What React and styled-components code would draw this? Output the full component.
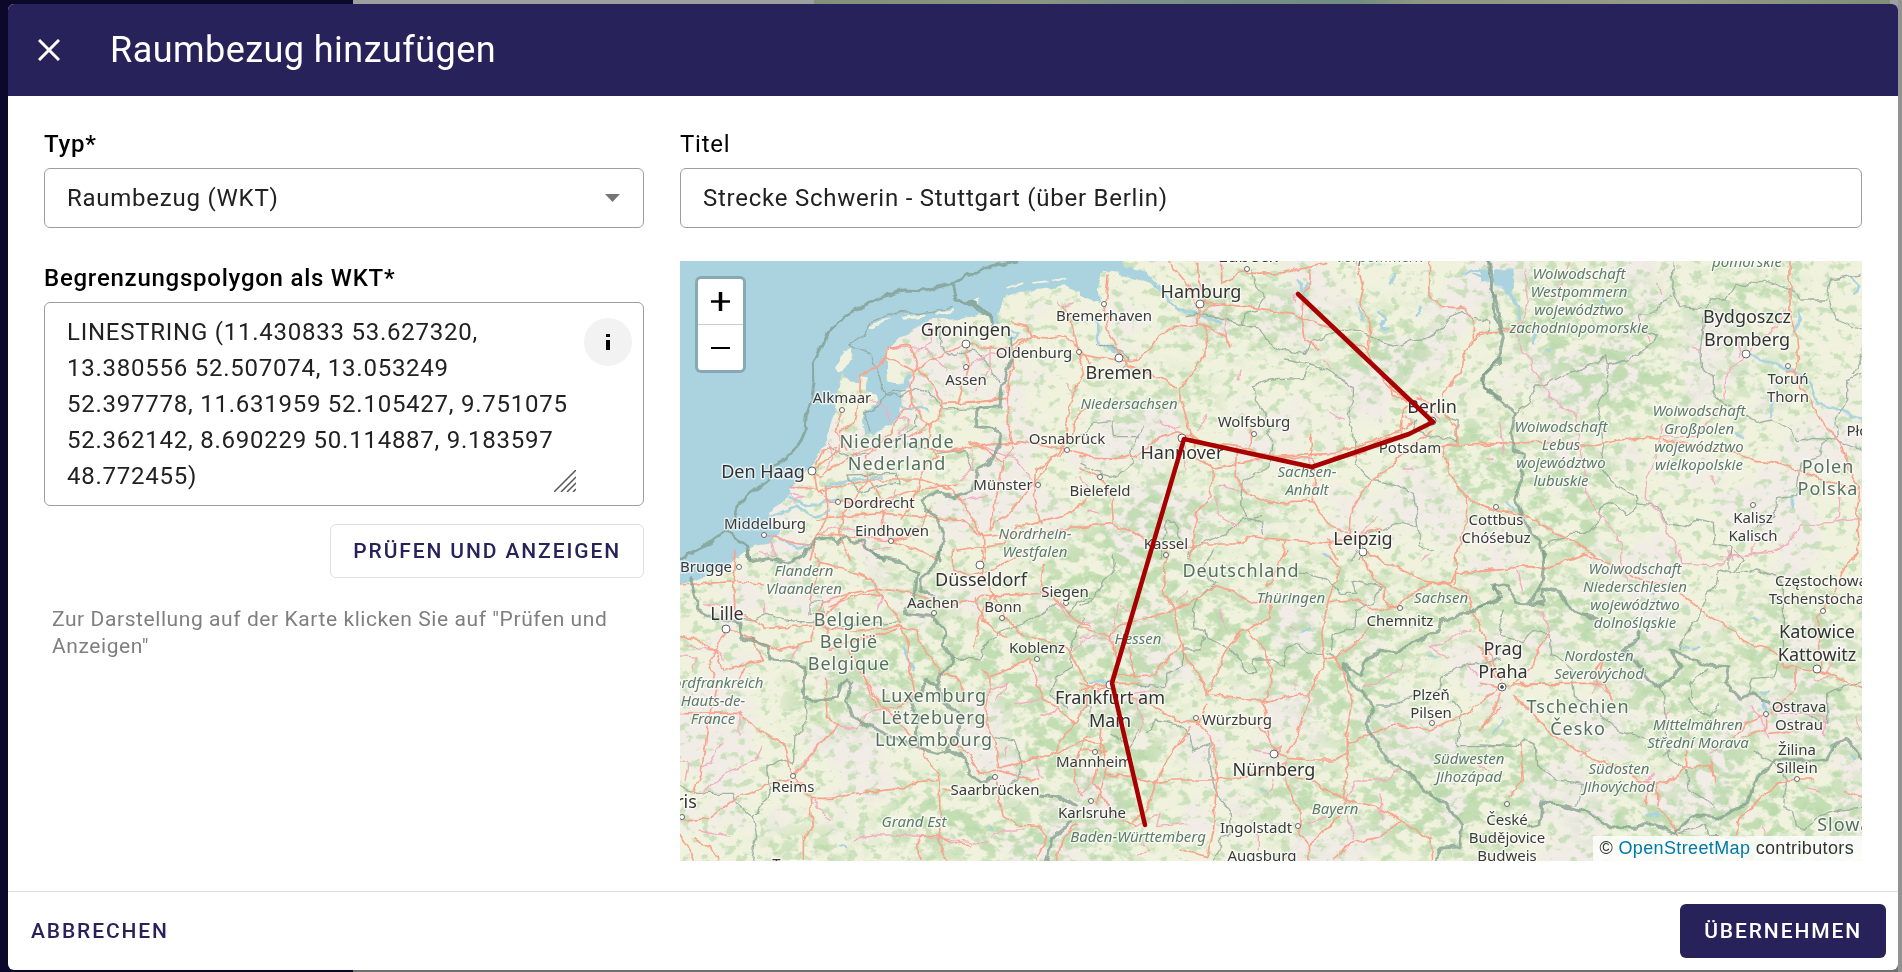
import React, { useState } from "react";
import styled, { createGlobalStyle, css } from "styled-components";

const navy = "#28225a";

const GlobalStyle = createGlobalStyle`
  *, *::before, *::after { box-sizing: border-box; }
  body {
    margin: 0;
    font-family: Roboto, "Liberation Sans", sans-serif;
    color: #000;
  }
  button, input, select, textarea { font: inherit; color: inherit; letter-spacing: inherit; }
`;

const Page = styled.div`
  display: grid;
  grid-template-columns: 353px 1fr;
  min-height: 100vh;
  background: #929292;
`;

const Sidebar = styled.div`
  background: #0b0829;
`;

const Results = styled.div`
  display: flex;
  justify-content: flex-end;
  padding-right: 8px;
  border-right: 4px solid #929292;
  background: linear-gradient(#9f9f9f 0 50%, #707070 50%);
`;

const ResultsMap = styled.div`
  width: 70%;
  height: 40%;
  background: linear-gradient(90deg, #84907c, #8b9581 20%, #7b8f89 30%, #6f8d80 50%, #8d9783 56%, #969a8a 80%, #7e8f76);
`;

const Backdrop = styled.div`
  position: fixed;
  inset: 0;
  display: flex;
  padding: 4px 4px 2px 8px;
`;

const Dialog = styled.form`
  flex: 1;
  min-width: 0;
  display: flex;
  flex-direction: column;
  overflow: hidden;
  background: #fff;
  border-radius: 6px;
  font-size: 24px;
  letter-spacing: 0.03125em;
`;

const Header = styled.header`
  display: flex;
  align-items: center;
  gap: 28px;
  height: 92px;
  padding: 0 8px;
  flex: none;
  background: ${navy};
  color: #fff;
`;

const CloseButton = styled.button`
  display: grid;
  place-items: center;
  width: 66px;
  height: 66px;
  padding: 0;
  border: 0;
  background: none;
  cursor: pointer;
`;

const Title = styled.h1`
  margin: 0;
  font-size: 36px;
  line-height: 48px;
  font-weight: 400;
  letter-spacing: 0.0125em;
`;

const Content = styled.div`
  flex: 1;
  min-height: 0;
  display: grid;
  grid-template-columns: 600px minmax(0, 1fr);
  grid-template-rows: auto 1fr;
  gap: 33px 36px;
  padding: 32px 36px 0;
`;

const Field = styled.div`
  display: flex;
  flex-direction: column;
  gap: 8px;
`;

const Label = styled.label`
  line-height: 32px;
  font-weight: ${(p) => (p.$required ? 500 : 400)};
`;

const outlined = css`
  border: 1px solid #9e9e9e;
  border-radius: 6px;
  background: #fff;
  color: #212121;
`;

const SelectBox = styled.div`
  display: grid;
  align-items: center;
  > * { grid-area: 1 / 1; }
  > svg { justify-self: end; margin-right: 24px; pointer-events: none; }
`;

const Select = styled.select`
  ${outlined}
  appearance: none;
  width: 100%;
  height: 60px;
  padding: 0 22px;
`;

const TextInput = styled.input`
  ${outlined}
  width: 100%;
  height: 60px;
  padding: 0 22px;
`;

const AreaBox = styled.div`
  ${outlined}
  display: flex;
  align-items: flex-start;
  height: 204px;
  padding: 11px 11px 9px 22px;
`;

const TextArea = styled.textarea`
  flex: 1;
  height: 182px;
  padding: 0;
  border: 0;
  outline: 0;
  resize: none;
  overflow: hidden;
  background: none;
  line-height: 36px;
`;

const Grip = styled.svg`
  flex: none;
  align-self: flex-end;
  margin: 0 8px 4px -22px;
`;

const InfoButton = styled.button`
  flex: none;
  display: grid;
  place-items: center;
  width: 48px;
  height: 48px;
  margin-top: 4px;
  padding: 0;
  border: 0;
  border-radius: 50%;
  background: #f2f2f2;
  color: #000;
`;

const WktColumn = styled.div`
  padding-top: 1px;
`;

const Button = styled.button`
  height: 54px;
  padding: 0 ${(p) => (p.$kind === "filled" ? 23 : 22)}px;
  border: 1px solid ${(p) => (p.$kind === "outlined" ? "#e0e0e0" : "transparent")};
  border-radius: 6px;
  background: ${(p) => (p.$kind === "filled" ? navy : "transparent")};
  color: ${(p) => (p.$kind === "filled" ? "#fff" : navy)};
  font-size: 21px;
  font-weight: 500;
  letter-spacing: 0.09em;
  text-transform: uppercase;
  cursor: pointer;
`;

const ButtonRow = styled.div`
  display: flex;
  justify-content: flex-end;
  padding-top: 18px;
`;

const Hint = styled.p`
  margin: 28px 8px 0;
  font-size: 21px;
  line-height: 27px;
  letter-spacing: 0.0275em;
  color: #7f7f7f;
`;

const Footer = styled.footer`
  flex: none;
  display: flex;
  align-items: center;
  justify-content: space-between;
  height: 79px;
  padding: 0 12px 0 0;
  border-top: 1px solid #e0e0e0;
`;

const MapFrame = styled.section`
  position: relative;
  height: 600px;
  overflow: hidden;
  font-family: "Liberation Sans", sans-serif;
  > svg { display: block; width: 100%; height: 100%; }
`;

const ZoomControl = styled.div`
  position: absolute;
  left: 15px;
  top: 15px;
  display: flex;
  flex-direction: column;
  border: 3px solid rgba(0, 0, 0, 0.2);
  border-radius: 6px;
  background: #fff;
  background-clip: padding-box;
`;

const ZoomButton = styled.button`
  display: grid;
  place-items: center;
  width: 45px;
  height: 45px;
  padding: 0;
  border: 0;
  background: none;
  & + & { height: 46px; border-top: 1px solid #ccc; }
`;

const Attribution = styled.div`
  position: absolute;
  right: 0;
  bottom: 0;
  padding: 0 8px 0 7px;
  background: rgba(255, 255, 255, 0.8);
  color: #333;
  font-size: 18px;
  line-height: 25px;
  letter-spacing: 0.02em;
  a { color: #0078a8; text-decoration: none; }
`;

const Place = styled.text`
  font-family: "Noto Sans", sans-serif;
  letter-spacing: normal;
  text-anchor: middle;
  paint-order: stroke;
  stroke: rgba(255, 255, 255, 0.65);
  stroke-width: 3px;
  stroke-linejoin: round;
  ${(p) => kinds[p.$kind]}
`;

const kinds = {
  L: css`font-size: 18px; fill: #333;`,
  M: css`font-size: 15px; fill: #3b3b3b;`,
  C: css`font-size: 18px; fill: #56705f; letter-spacing: 1px;`,
  R: css`font-size: 15px; fill: #5f7a6a; font-style: italic;`,
};

const labels = [
  ["L", 286, 75, "Groningen"], ["L", 83, 217, "Den Haag"], ["L", 521, 37, "Hamburg"], ["L", 568, 1, "Lübeck"],
  ["L", 439, 118, "Bremen"], ["L", 502, 198, "Hannover"], ["L", 683, 284, "Leipzig"], ["L", 752, 152, "Berlin"],
  ["L", 1067, 62, "Bydgoszcz", "Bromberg"], ["L", 47, 359, "Lille"], ["L", 301, 325, "Düsseldorf"],
  ["L", 430, 443, "Frankfurt am", "Main"], ["L", -4, 547, "Paris"], ["L", 823, 394, "Prag", "Praha"],
  ["L", 594, 515, "Nürnberg"], ["L", 1137, 377, "Katowice", "Kattowitz"],
  ["M", 424, 60, "Bremerhaven"], ["M", 354, 97, "Oldenburg"], ["M", 286, 124, "Assen"], ["M", 162, 142, "Alkmaar"],
  ["M", 199, 247, "Dordrecht"], ["M", 85, 268, "Middelburg"], ["M", 212, 275, "Eindhoven"], ["M", 323, 229, "Münster"],
  ["M", 387, 183, "Osnabrück"], ["M", 574, 166, "Wolfsburg"], ["M", 420, 235, "Bielefeld"], ["M", 486, 288, "Kassel"],
  ["M", 730, 192, "Potsdam"], ["M", 816, 264, "Cottbus", "Chóśebuz"], ["M", 1108, 123, "Toruń", "Thorn"],
  ["M", 1185, 175, "Płock"], ["M", 1073, 262, "Kalisz", "Kalisch"], ["M", 26, 311, "Brugge"], ["M", 253, 347, "Aachen"],
  ["M", 323, 351, "Bonn"], ["M", 385, 336, "Siegen"], ["M", 357, 392, "Koblenz"], ["M", 414, 506, "Mannheim"],
  ["M", 113, 531, "Reims"], ["M", 315, 534, "Saarbrücken"], ["M", 412, 557, "Karlsruhe"], ["M", 115, 608, "Troyes"],
  ["M", 720, 365, "Chemnitz"], ["M", 751, 439, "Plzeň", "Pilsen"], ["M", 557, 464, "Würzburg"],
  ["M", 576, 572, "Ingolstadt"], ["M", 582, 600, "Augsburg"], ["M", 827, 564, "České", "Budějovice", "Budweis"],
  ["M", 1141, 325, "Częstochowa", "Tschenstochau"], ["M", 1119, 451, "Ostrava", "Ostrau"], ["M", 1117, 494, "Žilina", "Sillein"],
  ["C", 217, 187, "Niederlande", "Nederland"], ["C", 1148, 212, "Polen", "Polska"],
  ["C", 169, 365, "Belgien", "België", "Belgique"], ["C", 254, 441, "Luxemburg", "Lëtzebuerg", "Luxembourg"],
  ["C", 561, 316, "Deutschland"], ["C", 898, 452, "Tschechien", "Česko"], ["C", 1178, 570, "Slowakei"],
  ["R", 355, 278, "Nordrhein-", "Westfalen"], ["R", 700, 1, "Vorpommern"], ["R", 449, 148, "Niedersachsen"],
  ["R", 627, 216, "Sachsen-", "Anhalt"], ["R", 899, 18, "Woiwodschaft", "Westpommern", "województwo", "zachodniopomorskie"],
  ["R", 1067, 6, "pomorskie"], ["R", 1019, 155, "Woiwodschaft", "Großpolen", "województwo", "wielkopolskie"],
  ["R", 881, 171, "Woiwodschaft", "Lebus", "województwo", "lubuskie"], ["R", 124, 315, "Flandern", "Vlaanderen"],
  ["R", 33, 427, "Nordfrankreich", "Hauts-de-", "France"], ["R", 234, 566, "Grand Est"], ["R", 458, 581, "Baden-Württemberg"],
  ["R", 611, 342, "Thüringen"], ["R", 761, 342, "Sachsen"], ["R", 458, 383, "Hessen"],
  ["R", 789, 503, "Südwesten", "Jihozápad"], ["R", 655, 553, "Bayern"],
  ["R", 955, 313, "Woiwodschaft", "Niederschlesien", "województwo", "dolnośląskie"],
  ["R", 919, 400, "Nordosten", "Severovýchod"], ["R", 1018, 469, "Mittelmähren", "Střední Morava"],
  ["R", 939, 513, "Südosten", "Jihovýchod"],
];
const pitch = { L: 23, M: 18, C: 22, R: 18 };

const bigTowns = [
  [286, 83], [132, 210], [520, 43], [439, 97], [502, 177], [683, 291], [752, 160], [1066, 93], [46, 368], [300, 304],
  [594, 493], [1137, 408], [430, 424],
];
const towns = [
  [286, 106], [162, 149], [158, 241], [84, 274], [211, 280], [358, 224], [387, 189], [399, 91], [567, 8], [424, 43],
  [574, 173], [420, 216], [486, 294], [816, 246], [1108, 105], [1073, 244], [59, 306], [254, 352], [322, 357], [386, 342],
  [357, 398], [113, 515], [315, 516], [720, 347], [516, 457], [752, 462], [415, 491], [411, 540], [618, 565], [827, 543],
  [1143, 350], [1086, 453], [1117, 518], [2, 556],
];

/* Six map tiles, each drawn in its own grid at a third of a pixel per unit. */
const tiles = [
  {
    at: [-10, -11],
    sea: [
      "M0 0H1270V130L1210 122L1190 108L1120 118L1050 125L1008 138L985 185L988 225L965 215L945 190L870 208L790 210L740 230L690 260L650 300L652 390L680 405L720 395L725 410L692 420L695 460L690 490L665 520L620 545L580 552L574 520L585 480L625 455L620 435L588 425L590 385L572 380L572 400L545 398L515 368L505 420L490 500L460 590L425 650L390 690L355 715L362 730L325 765L295 790L310 830L330 845L300 880L250 888L200 915L170 960H0Z",
    ],
    land: [
      "M540 290L548 310L535 345L512 365L498 358L515 320Z", "M595 232L640 210L665 205L640 220L600 240Z",
      "M695 200L770 193L760 203L700 209Z", "M795 185L855 177L850 187L800 194Z", "M905 152L930 145L920 162Z",
      "M1005 112L1060 97L1060 103L1010 116Z", "M1085 97L1135 90L1135 97L1090 101Z", "M1150 82L1190 86L1185 92L1150 88Z",
      "M650 295L700 290L690 400L655 395Z",
    ],
    water: [
      "M300 800L380 770L430 800L480 785", "M330 865L390 895L420 885", "M360 740L410 770L500 745", "M470 710L540 690L640 680",
      "M590 490L610 550", "M720 380L700 410", "M690 470L775 480", "M1015 240L1050 250L1040 265L1015 262",
    ],
    national: [
      "M30 925L100 890L170 840L195 810L205 765L240 730L290 695L310 645L350 625L385 590L405 545L408 500L425 450L432 400L430 340L460 280L480 240L530 195L600 155L700 120L760 122L845 100L890 75L940 60L990 42L1040 33",
      "M845 100L860 145L900 165L940 190L965 200L968 235", "M895 155L935 175L965 195",
      "M1022 265L1025 330L1010 370L995 420L990 470L920 475L920 530L975 535L990 560L990 590L955 640L920 660L910 720L850 740L800 725L762 750L765 780L800 800L820 850L810 930",
      "M170 845L230 890L240 930", "M400 920L440 870L480 860L505 880L530 855L555 880L580 870L590 900L640 930",
    ],
    border: [
      "M535 283L580 255L600 220L680 187L750 190L850 170", "M535 283L600 310L645 430L710 420", "M645 430L635 460L580 490L600 540",
      "M820 230L810 290L850 320L905 300L950 340L990 400", "M645 430L690 440L740 410L795 440L820 480L940 475",
      "M740 500L740 530L685 560L700 585L800 600", "M530 675L545 700L570 730L640 705L690 700L680 670L530 675",
      "M470 590L540 620L600 610", "M910 660L880 600L800 610",
    ],
    road: [
      "M575 380L650 320L730 365L800 320L860 295L890 280L940 295L1010 290L1080 260L1150 265L1180 255L1230 300L1260 340",
      "M650 320L655 295L720 285L750 360L815 450L815 500L720 560L640 580L540 620L450 680L430 670",
      "M575 380L572 430L555 520L515 540L510 600L440 650", "M732 370L722 410L725 460L680 500L670 540L590 620L590 700L520 790L510 860L540 930",
      "M725 460L760 510L780 525L775 600L830 605L900 590L1050 575L1190 600L1260 620", "M890 290L897 350L870 440L860 460L990 445",
      "M820 460L940 455L1010 445", "M1025 220L1070 230L1080 260L1030 300L1030 350L1015 390L1015 530L1030 590L1000 640L975 760L960 840",
      "M430 670L440 725L480 715L600 690L760 690L840 720", "M360 710L430 710L480 755L610 760L730 720L860 705",
      "M515 480L500 540L530 600", "M440 810L520 800L640 790L760 800L880 810L940 860L1100 845L1260 830",
      "M290 855L380 880L420 885L450 850L580 860L650 870L740 900L800 930", "M760 560L800 620L770 640L750 690L720 770L690 810",
      "M640 790L635 840L665 875L740 850L780 780", "M835 710L880 760L940 860L945 930", "M960 840L1010 790L1060 740L1170 600L1210 560L1220 500L1260 460",
      "M1190 600L1160 620L1100 660L1090 740L1115 820", "M1180 170L1210 230L1225 310", "M440 640L460 600L500 590",
      "M470 710L475 800L440 860L420 930", "M600 690L630 740L640 790", "M1000 640L950 600L900 575", "M860 900L1000 880L1040 830L1180 800L1260 740",
      "M1225 310L1240 370L1200 460L1180 600",
    ],
    pink: [
      "M650 295L760 290L830 360", "M770 220L780 280L740 300", "M660 510L650 470L600 450", "M670 500L720 505L690 550",
      "M880 360L960 310L1000 320", "M905 590L910 650L870 690", "M1160 155L1180 175L1210 155", "M940 590L1040 630L1095 700",
      "M870 750L950 740", "M300 870L320 920L270 905", "M360 730L400 740L370 755", "M960 290L960 350L920 420",
      "M680 720L640 800", "M470 580L490 620L470 660", "M440 850L500 830L560 845", "M1190 400L1210 430", "M560 870L600 900L660 890",
    ],
  },
  {
    at: [400, -11],
    sea: ["M0 0H130L120 65L70 60L55 90L60 160L0 140Z", "M100 0L130 55L200 65L240 110L245 130L215 100L170 85L120 75Z"],
    land: ["M0 145L30 145L60 165L50 200L0 190Z"],
    water: [
      "M240 110L265 150L310 185L360 195L420 215", "M660 90L665 120M680 100L675 150", "M895 180L915 205L905 230L925 235",
      "M835 170L845 210", "M945 70L930 100", "M1150 70L1210 60L1230 90L1180 75", "M1020 170L1010 200", "M50 200L55 280L120 310",
    ],
    national: ["M1225 33L1240 80L1240 180L1262 240", "M1262 330L1215 370L1210 410L1262 445"],
    border: [
      "M515 60L530 110L555 140L530 180L495 190L490 225L540 235L560 270L600 300L670 310L690 275L730 265L780 240L840 245L890 270L960 290L1000 270L1040 265L1090 230L1110 200L1150 185L1180 205L1230 210L1225 255",
      "M490 225L440 210L370 190L320 200", "M620 330L690 345L740 360L800 400L820 410L820 450L805 490L820 540L830 640L870 690L930 700L1000 730L1010 800L1020 890L1060 900",
      "M690 345L670 385L570 390L520 405L530 450L560 500L575 580L570 650L490 690L485 760L500 800L545 820L550 850",
      "M545 800L485 810L440 850L340 890L320 930", "M190 530L150 600L160 640L110 680L40 660L0 640", "M0 560L40 520L95 515L100 560L180 560",
      "M50 280L120 300L150 330L130 350", "M240 930L260 810L290 830L300 870", "M1010 510L1000 540L1060 560L1130 570L1135 510L1100 500",
      "M840 930L870 850L960 820L1010 830",
    ],
    road: [
      "M260 30L300 75L330 110L360 200L350 225L375 225", "M350 35L352 90L380 160L500 170L640 190L670 210L740 230L860 300L880 350L930 410L990 460",
      "M440 160L390 170L350 200L350 230L290 225L235 260L200 310L160 335L110 330L0 310", "M425 30L425 100L490 65L500 70L610 68L740 40",
      "M375 225L380 290L350 360L300 410L300 450L330 550L370 580L480 590L570 620L760 610L870 575L960 540L1000 520",
      "M85 70L75 170L85 240L120 310L150 345L220 375L290 410", "M375 225L440 260L450 285", "M690 60L690 110L670 130L665 200L675 265L720 300",
      "M825 30L850 110L840 160L870 220L865 300", "M1048 30L1050 140L1090 170L1160 175L1180 210L1180 270L1150 310L1140 370L1090 420L1090 450",
      "M1262 240L1200 250L1180 270", "M240 560L290 545L340 560L350 625L400 655L470 640L580 620L700 625",
      "M400 655L390 740L350 790L340 880L330 930", "M470 590L465 680L500 730L570 760L700 755L705 670L695 600", "M700 755L740 820L780 840L810 850L815 780L860 710L960 620L1060 540",
      "M340 885L460 885L510 860L620 870L740 880L820 860L900 835", "M0 620L110 625L170 620L240 560", "M0 655L60 680L95 740L100 820L0 830", "M100 820L180 860L240 890L340 890",
      "M510 590L512 540M960 560L970 480L1010 450L1060 460L1130 530L1135 580L1080 590L1262 580", "M1090 590L1110 680L1160 740L1230 780L1262 780", "M1160 740L1160 800L1125 930",
      "M935 410L940 440L1000 450", "M740 870L770 930M620 870L600 930", "M990 550L900 570L830 620L760 620", "M690 600L695 550",
    ],
    pink: [
      "M640 130L650 160", "M440 180L435 240L450 290", "M480 360L475 390", "M240 510L280 540L300 530", "M380 490L350 540", "M400 740L420 800L475 830", "M420 700L480 720",
      "M310 590L320 660", "M730 330L750 360M750 490L790 510", "M1010 430L1040 470L1080 510", "M970 500L1000 520", "M680 640L700 600", "M1000 660L970 660", "M840 850L890 800", "M0 680L30 720M20 780L60 790",
    ],
  },
  {
    at: [800, -11],
    sea: ["M45 60L100 55L105 110L85 140L65 110L45 100Z", "M0 52L30 55L35 95L0 98Z"],
    land: [],
    water: [
      "M85 120L115 180L120 210", "M160 250L165 280", "M200 300L210 305", "M800 310L900 350L940 360L990 400L1010 460L1080 480L1145 510", "M1115 80L1135 110L1125 130",
      "M950 240L960 180", "M870 440L875 500", "M770 550L790 560", "M940 740L935 775", "M80 760L100 780", "M360 130L370 160",
    ],
    national: ["M22 33L35 110L55 180L70 260L55 330L12 375L10 410L60 450L105 490L95 550L100 600L130 610L125 690L105 750L150 850L180 870L190 930"],
    border: [
      "M580 35L575 120L600 170L660 175", "M575 135L540 160L530 185L480 190L475 235L530 255L520 280L440 330L385 345L380 315L350 340L290 365L250 375L200 405L165 405L150 460L105 490",
      "M385 345L380 420L350 460L360 500L370 590L360 650L390 690L430 720L470 740L470 770L440 795L400 755L365 770L360 805L320 850L270 850L190 890",
      "M675 175L690 150L740 150L770 100L810 105L850 90L930 120L960 150L1040 150L1055 90L1140 75", "M675 175L660 310L665 355L700 380L700 430L730 460L790 490L830 520L880 510L935 540L955 575L1000 565L1070 570L1145 600",
      "M1050 150L1070 210L1145 240", "M1145 370L1100 390L1100 450L1070 500L1075 560L1020 580L1020 620L960 640L950 740L890 745L885 800L830 830",
      "M470 760L530 770L560 820L620 830L650 810L700 820L705 880L750 890L745 930", "M1145 320L1120 370",
    ],
    road: [
      "M0 258L60 240L110 238", "M930 33L930 190L950 250L955 330L945 370L975 430L1030 520L1085 580L1115 680L1140 720L1130 790L1140 870L1120 930",
      "M0 576L100 580L200 575L340 588L420 570L500 562L590 575L680 595L760 605L830 635L900 640L970 665L1030 690L1140 720", "M0 765L60 785L140 795L220 845L300 885L350 920", "M270 930L320 910", "M920 360L950 370",
    ],
    pink: [
      "M265 33L250 80L225 150", "M135 60L145 150L130 220L105 235L125 300L155 325L160 365L220 450L290 500L300 600L325 740L380 820L425 880L425 930",
      "M920 180L890 230L830 270L800 320L740 370L730 450L690 510L640 560L540 560", "M540 560L530 620L500 690L495 750L540 790L570 860L605 930", "M545 520L540 560", "M780 320L775 260", "M720 920L800 915L880 910L930 870L960 825L1060 820L1115 810L1145 810",
      "M1080 740L1075 800L1060 820", "M500 240L510 275", "M800 920L830 880", "M60 520L70 610", "M640 295L660 300M690 680L705 700", "M20 630L40 625", "M740 900L760 930", "M530 100L545 130",
    ],
  },
  {
    at: [-10, 289],
    sea: ["M0 0H235L190 30L110 75L60 95L0 115Z"],
    land: [],
    water: ["M510 885L530 890", "M700 290L730 360", "M960 830L970 835"],
    national: [
      "M60 80L80 150L80 180L130 205L210 220L215 265L260 275L295 290L300 330L370 335L405 355L400 440L430 455L500 445L510 405L530 390L545 400L530 450L545 500L600 530L660 560L740 590L800 610L840 600L885 625L900 670L930 695L975 685",
      "M235 0L240 35L300 25L360 40L410 0", "M600 0L620 20L680 30L740 70L730 150L705 190L790 200L825 240L820 290L850 320L850 340L810 370L800 410L770 385L755 430L720 450L745 500L740 590",
      "M815 0L785 60L750 90L750 120L790 140", "M800 410L825 460L880 500L860 560L830 600", "M1110 735L1160 740L1220 765", "M1205 815L1150 860L1130 930",
    ],
    border: [
      "M215 205L250 210L290 190L320 205L380 215L440 215", "M420 155L455 150L460 190L420 190Z", "M440 215L480 235L560 225L690 215", "M850 325L900 325L930 330L935 295L985 250L1050 225L1100 200L1160 160L1200 190L1220 160L1260 140",
      "M405 450L410 520L375 560L370 640L330 630L290 655L300 730L250 800L260 860L245 930", "M30 705L80 730L190 730L200 760L250 800", "M975 560L1030 570L1040 600L1055 640L1040 690L1020 700",
      "M1200 300L1205 350L1160 380L1140 430L1190 470", "M1240 200L1210 260L1200 300",
    ],
    road: [
      "M30 105L190 95L195 180L290 235L420 225L560 245L690 230", "M190 90L280 105M195 0L190 90", "M170 240L120 330L140 420L115 520L95 660L70 730", "M175 235L240 265L330 300L420 275L455 160L540 130L620 115L740 130",
      "M30 260L90 270L130 300L160 360L230 340L280 330L245 270", "M30 488L210 490L260 540L340 580L365 670L420 740L430 830L400 860L400 930", "M425 745L490 745L560 730L700 715L740 695L810 690",
      "M420 150L450 40L430 0M450 40L530 60L600 90L620 120L690 220", "M690 230L715 290L720 360L735 430L690 470L640 480L560 340L540 300", "M620 470L580 380L560 350", "M640 470L700 530L760 600L770 630L805 665L810 780L800 870L830 930",
      "M370 680L470 560L510 525L470 500L470 380", "M690 230L740 240L760 290L810 370L860 380L880 420L880 460", "M735 130L830 180L860 160L930 140L1110 130", "M935 0L940 80L970 130L1000 200L1060 255L1180 290", "M970 130L930 200L910 290M910 140L940 210L1010 265",
      "M1120 50L1110 120L1160 150L1210 205L1260 230", "M940 360L960 390L950 470L945 520L975 570L980 650L1000 650L1100 625L1170 605L1230 575L1260 560", "M960 380L1010 360L1080 325L1100 400L1120 450L1160 470L1210 520L1155 610",
      "M1190 290L1250 400L1250 470L1210 520", "M830 560L900 620L930 670L980 660L1050 680L1100 690", "M980 700L1000 800L1040 825L1110 830L1130 860L1100 930", "M820 715L850 715M745 860L800 855L840 875L900 885",
      "M30 815L120 805L190 750L260 720L330 690L400 700", "M30 850L60 900L70 930M70 870L120 890L140 930", "M745 870L750 930M1240 570L1220 640L1210 700L1240 740", "M1220 820L1180 860L1160 930", "M850 0L850 60L900 80L960 60L1080 0", "M480 170L580 130L640 140",
      "M200 400L230 340M540 130L460 200L480 300L530 280L600 260L680 240",
    ],
    pink: [
      "M100 160L150 170M280 150L285 190M330 300L380 290L360 340", "M50 285L130 300L160 330", "M30 320L80 325L70 360", "M30 635L55 640L45 690", "M280 590L260 630L170 670L100 730", "M155 580L120 640L100 650", "M370 675L400 640L440 590L500 530",
      "M500 525L560 540L585 490L640 480", "M550 870L620 855L740 855L810 865L950 880", "M750 600L720 590", "M1110 500L1170 480", "M1035 465L1120 445", "M1200 310L1250 270", "M950 420L1010 400L980 450", "M1010 590L1005 620", "M1100 640L1105 680L1120 690", "M965 860L1000 840L1060 840", "M1260 220L1190 200L1140 130", "M430 750L480 815", "M80 840L180 855M210 490L210 555",
      "M640 140L620 180",
    ],
  },
  {
    at: [400, 289],
    sea: [],
    land: [],
    water: ["M730 10L750 18", "M1050 320L1065 325", "M30 400L90 390", "M670 245L690 240", "M545 715L555 720"],
    national: [
      "M1262 140L1220 160L1160 190L1085 210L1080 240L1020 270L990 280L950 310L900 300L860 330L840 380L790 340L810 390L870 450L880 480L855 520L880 560L920 630L980 660L1040 730L1100 760L1145 825L1140 890L1080 895L1070 930",
      "M1262 130L1235 120L1245 100",
    ],
    border: [
      "M100 20L105 60L70 90L50 130L20 160L0 165", "M380 120L345 160L340 240L375 240L380 265L440 290L485 330L490 365L530 365L515 330L580 330L610 350L620 290L650 280L680 310L750 310L770 330",
      "M380 120L405 100L370 60L400 0", "M310 290L310 350L260 370L260 410L170 405", "M200 550L230 510L290 520L330 560L340 600L390 580L390 640L400 700L410 740L450 780L455 850L420 860L425 890L400 930", "M90 550L150 590L180 540",
      "M660 70L740 90L780 130L830 130L820 90L900 110L880 160L830 180L825 230L760 250L755 300", "M890 465L950 465L1000 440L1080 420L1085 380L1160 345L1262 330", "M830 0L810 30", "M0 450L30 470L30 540", "M1262 590L1130 590L1145 480L1120 450",
      "M380 265L375 240M310 300L360 300L370 260",
    ],
    road: [
      "M260 0L250 120L280 180L300 270L320 330L370 400L385 435L460 440L550 460L650 435L690 430", "M270 180L350 150L400 110L460 125L520 155L570 155L570 205L500 240L480 245L435 310L400 390L380 435",
      "M0 230L90 260L110 330L90 400L0 420M100 380L220 375L300 290", "M270 185L180 210L130 220L90 260M150 290L160 380", "M560 110L580 90L600 30L620 0", "M500 245L550 300L575 360L575 410L550 460L570 580L620 625L700 630L770 630L800 615L805 580L880 550L935 525L1050 540L1160 490L1262 410",
      "M750 20L780 60L745 150L725 250L735 330L690 430L670 500L650 560L620 610", "M745 155L830 150L870 175L940 175L1000 130L1050 100L1100 100L1160 130L1190 210L1262 390", "M850 20L880 90L910 110L910 150L940 175", "M850 0L940 50L1040 95L1110 100L1130 70L1262 60",
      "M735 330L770 320L830 280L870 230", "M760 320L790 360L815 460L800 550L805 620L790 750", "M150 440L220 470L290 510L360 520L380 460", "M350 515L390 560L400 600L410 690", "M330 530L260 630L225 700L200 780L150 820", "M80 670L150 680L220 700L270 690L410 690L500 680L620 640",
      "M410 690L400 850L380 920L300 900", "M615 640L620 700L660 780L660 850L688 885L690 930", "M688 885L760 820L800 750L890 770L960 810L1050 870L1055 930", "M960 815L900 860L815 880L760 930", "M600 670L700 690L740 720L800 750", "M0 575L70 580L80 660L50 760M10 600L80 605",
      "M70 490L60 600L40 700L100 790L170 830M0 400L50 420L100 400L180 400", "M530 520L570 570M600 590L600 620", "M1262 470L1200 540M1130 0L1125 100",
    ],
    pink: [
      "M100 240L115 165L150 180", "M0 265L50 260L110 280", "M320 120L290 160M420 180L440 240", "M170 450L190 520L180 560", "M520 600L580 610L600 590", "M170 830L240 790L230 830L320 820", "M190 880L210 900L170 920", "M0 740L30 700L20 680", "M790 760L830 690L920 690L960 655", "M800 790L820 870", "M900 730L905 810",
      "M535 840L535 900", "M560 740L580 690", "M1045 290L1110 270L1150 240L1170 240M1045 290L1110 325", "M845 410L890 400L960 360L965 340", "M1160 345L1200 380", "M1160 150L1165 120", "M630 230L650 240M640 400L660 410", "M230 420L160 430", "M1025 30L1050 10", "M680 820L740 800",
    ],
  },
  {
    at: [800, 289],
    sea: [],
    land: [],
    water: ["M610 290L625 293M640 295L655 292", "M820 205L835 208", "M500 795L535 790L530 800", "M845 425L860 425", "M850 450L855 480", "M1110 620L1125 630", "M515 130L520 132", "M40 550L70 510"],
    national: [
      "M190 0L190 60L180 110L145 165L190 155L190 115L240 125L270 180L350 205", "M0 170L60 150L35 105L85 110L110 160L190 165", "M480 245L465 280L430 300L470 340L510 390L530 405L580 385L600 350L570 300L620 320L680 345L750 350L735 395L780 445L820 430L870 460",
      "M145 830L180 825L185 755L240 765L270 770L330 790L390 830L470 835L500 815L590 850L620 810L650 795L720 805L800 760L830 680L870 655L885 630L960 630L1040 630L1060 590L1100 565L1145 625",
    ],
    border: [
      "M70 180L55 220L70 260L130 275L160 245L210 250L215 310L270 350L280 440L310 460L420 540L500 570L560 570L550 420L540 400", "M560 570L570 630L620 660L630 720L700 765", "M0 585L120 590L135 565L165 580L170 650L230 690L310 700L290 765",
      "M600 300L610 250L650 215L680 140L710 100L715 60L760 70L790 30L760 0", "M760 70L830 60L890 80L910 110L910 290L880 380L820 385L805 430", "M630 440L640 470L690 500L720 460", "M680 360L630 400L640 440", "M820 600L850 620L885 640L920 690L910 770L940 780L950 830L970 840", "M870 480L910 460L1040 520L1040 430L1090 410L1145 400", "M750 0L750 60", "M600 850L680 820L690 860L800 860", "M970 840L1010 800L1080 780L1145 775",
      "M560 570L570 600L550 620",
    ],
    road: [
      "M0 60L150 50L190 60L310 10L400 45L480 90L580 110L620 150L690 200L740 230L800 280L880 300L920 350L1000 360L1040 370L1145 415", "M1130 0L1085 70L1070 120L1010 200L1015 280L1020 350", "M0 400L60 410L100 405L260 400L370 400L400 450", "M120 400L240 405", "M210 250L170 300L160 350L100 400",
      "M95 435L150 480L210 550L290 600L350 630L420 650L470 690L520 700L570 695L620 650L690 650L710 695", "M620 650L620 600M530 705L535 770L590 840L595 860", "M505 705L500 765", "M60 430L30 500L0 540M0 455L40 430M0 290L50 380", "M120 590L130 690L90 740",
      "M945 360L945 420L870 490L800 520L760 560M860 490L860 540L790 560M870 550L950 540", "M950 685L890 700L830 760L780 800L770 850", "M950 690L1000 690M1090 725L1145 740", "M690 630L700 670", "M340 370L370 330L350 400",
    ],
    pink: [
      "M165 180L190 190L210 250M110 60L130 130", "M425 0L420 50L440 90M600 0L605 40L720 45L750 20L900 0", "M340 430L350 400L400 440M340 400L350 380", "M570 480L555 500M810 470L840 500L870 570", "M870 490L980 490L1035 500L1030 560", "M1040 370L1060 330L1040 300M1000 390L1050 380",
      "M980 710L1020 720M690 610L730 580", "M630 540L610 570", "M300 620L330 600M500 690L520 670", "M845 830L850 850M1145 560L1130 500", "M0 650L30 660",
    ],
  },
];

const woods = [
  [480, 140, 60, 22], [560, 55, 70, 35], [470, 270, 60, 60], [560, 250, 50, 24], [420, 330, 70, 60], [330, 400, 70, 45], [230, 400, 70, 40], [240, 330, 40, 24],
  [460, 400, 60, 50], [530, 360, 60, 40], [600, 390, 60, 40], [680, 420, 60, 70], [760, 540, 90, 60], [450, 500, 40, 50], [380, 480, 50, 50], [340, 580, 60, 40], [430, 570, 40, 45],
  [620, 540, 50, 40], [760, 350, 60, 30], [880, 350, 60, 40], [960, 400, 60, 34], [1000, 460, 60, 40], [1100, 560, 90, 50], [1040, 500, 40, 60], [900, 60, 90, 50], [940, 120, 70, 50], [890, 240, 60, 60], [700, 90, 60, 40], [800, 200, 50, 50],
  [1060, 40, 60, 30], [1090, 120, 50, 20], [1110, 380, 70, 50], [160, 440, 60, 30], [960, 560, 60, 30], [260, 560, 60, 40], [130, 590, 50, 20], [830, 500, 60, 40], [1150, 470, 40, 50], [640, 320, 70, 20],
];

function Strokes({ paths, color, width, opacity }) {
  return (
    <g fill="none" stroke={color} strokeWidth={width} opacity={opacity} strokeLinejoin="round" strokeLinecap="round">
      {paths.map((d) => <path key={d} d={d} />)}
    </g>
  );
}

function TileLayer({ children }) {
  return tiles.map((t) => (
    <g key={t.at.join()} transform={`translate(${t.at[0]} ${t.at[1]}) scale(0.33333)`}>{children(t)}</g>
  ));
}

function MapDrawing() {
  return (
    <svg viewBox="0 0 1182 600" preserveAspectRatio="xMidYMid slice" role="img" aria-label="Karte mit Strecke Schwerin - Stuttgart">
      <defs>
        <filter id="scatter" x="0" y="0" width="100%" height="100%" colorInterpolationFilters="sRGB">
          <feTurbulence type="fractalNoise" baseFrequency="0.09 0.11" numOctaves="4" seed="8" />
          <feColorMatrix values="0 0 0 0 0.77  0 0 0 0 0.87  0 0 0 0 0.71  8 0 0 0 -4.5" />
        </filter>
        <filter id="groves" x="0" y="0" width="100%" height="100%" colorInterpolationFilters="sRGB">
          <feTurbulence type="fractalNoise" baseFrequency="0.06 0.08" numOctaves="5" seed="21" />
          <feColorMatrix values="0 0 0 0 0.73  0 0 0 0 0.85  0 0 0 0 0.67  7 0 0 0 -3.2" />
        </filter>
        <filter id="fields" x="0" y="0" width="100%" height="100%" colorInterpolationFilters="sRGB">
          <feTurbulence type="fractalNoise" baseFrequency="0.014" numOctaves="4" seed="3" />
          <feColorMatrix values="0 0 0 0 0.945  0 0 0 0 0.925  0 0 0 0 0.9  7 0 0 0 -3.4" />
        </filter>
        <filter id="soft"><feGaussianBlur stdDeviation="14" /></filter>
        <filter id="wiggle" x="-5%" y="-5%" width="110%" height="110%">
          <feTurbulence type="fractalNoise" baseFrequency="0.09" numOctaves="2" seed="5" />
          <feDisplacementMap in="SourceGraphic" scale="7" xChannelSelector="R" yChannelSelector="G" />
        </filter>
        <mask id="woodland">
          <g filter="url(#soft)" fill="#fff">
            {woods.map(([x, y, rx, ry]) => <ellipse key={`${x}-${y}`} cx={x} cy={y} rx={rx} ry={ry} />)}
          </g>
        </mask>
      </defs>
      <rect width="1182" height="600" fill="#f0f2dd" />
      <rect width="1182" height="600" filter="url(#fields)" />
      <rect width="1182" height="600" filter="url(#scatter)" opacity="0.8" />
      <g mask="url(#woodland)"><rect width="1182" height="600" filter="url(#groves)" opacity="0.8" /></g>
      <g filter="url(#wiggle)">
        <TileLayer>
          {(t) => (
            <>
              {t.sea.map((d) => <path key={d} d={d} fill="#aad3df" />)}
              {t.land.map((d) => <path key={d} d={d} fill="#f1f1e0" />)}
              <Strokes paths={t.water} color="#aad3df" width={8} />
            </>
          )}
        </TileLayer>
        <TileLayer>
          {(t) => (
            <>
              <Strokes paths={t.border} color="#8fa597" width={4} opacity={0.8} />
              <Strokes paths={t.pink} color="#f3adc0" width={4} />
              <Strokes paths={t.road} color="#f7a48d" width={5} />
              <Strokes paths={t.national} color="#7f9d8c" width={9} opacity={0.75} />
            </>
          )}
        </TileLayer>
      </g>
      <g fill="#fff" stroke="#666">
        {bigTowns.map(([x, y]) => <circle key={`${x}-${y}`} cx={x} cy={y} r="4" />)}
        {towns.map(([x, y]) => <circle key={`${x}-${y}`} cx={x} cy={y} r="2.5" />)}
        <circle cx="822" cy="426" r="4" />
        <circle cx="822" cy="426" r="1.5" fill="#444" />
      </g>
      {labels.map(([kind, x, y, ...lines]) =>
        lines.map((line, i) => (
          <Place key={`${x}-${y}-${line}`} $kind={kind} x={x} y={y + i * pitch[kind]}>{line}</Place>
        ))
      )}
      <polyline
        points="618,33 753,161 729,173 632,206 504,178 432,422 465,564"
        fill="none" stroke="#a80000" strokeWidth="4.5" strokeLinecap="round" strokeLinejoin="round"
      />
    </svg>
  );
}

const wkt =
  "LINESTRING (11.430833 53.627320, 13.380556 52.507074, 13.053249 52.397778, 11.631959 52.105427, 9.751075 52.362142, 8.690229 50.114887, 9.183597 48.772455)";

export default function App() {
  const [title, setTitle] = useState("Strecke Schwerin - Stuttgart (über Berlin)");
  const [geometry, setGeometry] = useState(wkt);
  return (
    <>
      <GlobalStyle />
      <Page>
        <Sidebar />
        <Results><ResultsMap /></Results>
      </Page>
      <Backdrop>
        <Dialog role="dialog" aria-labelledby="dialog-title" onSubmit={(e) => e.preventDefault()}>
          <Header>
            <CloseButton type="button" aria-label="Schließen">
              <svg width="22" height="22" viewBox="0 0 22 22" fill="none" stroke="#fff" strokeWidth="3">
                <path d="M1 1L21 21M21 1L1 21" />
              </svg>
            </CloseButton>
            <Title id="dialog-title">Raumbezug hinzufügen</Title>
          </Header>
          <Content>
            <Field>
              <Label htmlFor="type" $required>Typ*</Label>
              <SelectBox>
                <Select id="type" defaultValue="wkt">
                  <option value="wkt">Raumbezug (WKT)</option>
                </Select>
                <svg width="15" height="8" viewBox="0 0 15 8"><path d="M0 0H15L7.500 8Z" fill="#757575" /></svg>
              </SelectBox>
            </Field>
            <Field>
              <Label htmlFor="title">Titel</Label>
              <TextInput id="title" value={title} onChange={(e) => setTitle(e.target.value)} />
            </Field>
            <WktColumn>
              <Field>
                <Label htmlFor="wkt" $required>Begrenzungspolygon als WKT*</Label>
                <AreaBox>
                  <TextArea id="wkt" value={geometry} onChange={(e) => setGeometry(e.target.value)} />
                  <Grip width="22" height="22" viewBox="0 0 22 22" stroke="#555" strokeWidth="1.500">
                    <path d="M0 22L22 0M7 22L22 7M13 22L22 13M19 22L22 19" />
                  </Grip>
                  <InfoButton type="button" aria-label="Information">
                    <svg width="4" height="16" viewBox="0 0 4 16"><path d="M0 0H4V3H0ZM0 6H4V16H0Z" /></svg>
                  </InfoButton>
                </AreaBox>
              </Field>
              <ButtonRow>
                <Button type="button" $kind="outlined">Prüfen und Anzeigen</Button>
              </ButtonRow>
              <Hint>Zur Darstellung auf der Karte klicken Sie auf "Prüfen und Anzeigen"</Hint>
            </WktColumn>
            <MapFrame>
              <MapDrawing />
              <ZoomControl>
                <ZoomButton type="button" aria-label="Vergrößern">
                  <svg width="19" height="19" viewBox="0 0 19 19" stroke="#000"><path d="M0 9.500H19" strokeWidth="2.500" /><path d="M9.500 0V19" strokeWidth="3.500" /></svg>
                </ZoomButton>
                <ZoomButton type="button" aria-label="Verkleinern">
                  <svg width="19" height="19" viewBox="0 0 19 19" stroke="#000"><path d="M0 10H19" strokeWidth="2" /></svg>
                </ZoomButton>
              </ZoomControl>
              <Attribution>© <a href="#osm">OpenStreetMap</a> contributors</Attribution>
            </MapFrame>
          </Content>
          <Footer>
            <Button type="button" $kind="text">Abbrechen</Button>
            <Button type="submit" $kind="filled">Übernehmen</Button>
          </Footer>
        </Dialog>
      </Backdrop>
    </>
  );
}
